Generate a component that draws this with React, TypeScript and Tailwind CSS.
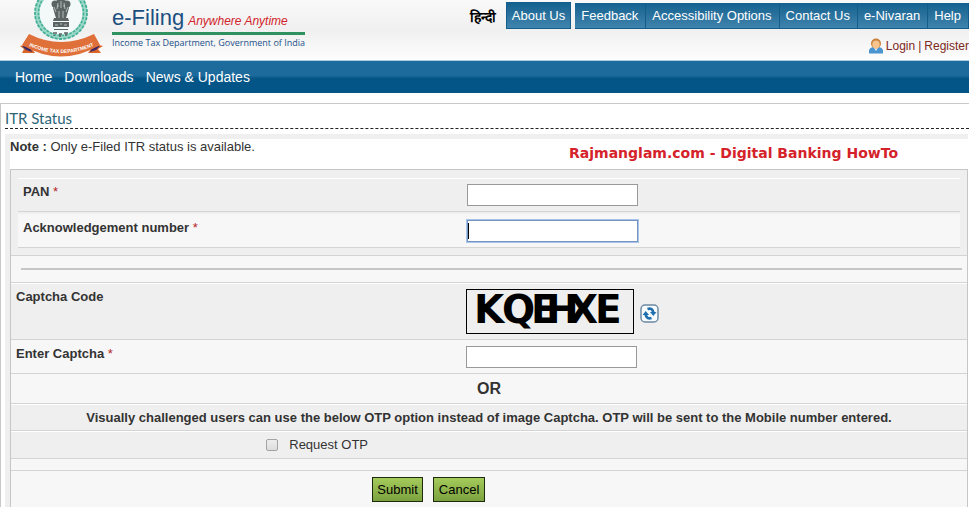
import React from 'react'

const topLinks = ['Feedback', 'Accessibility Options', 'Contact Us', 'e-Nivaran', 'Help']
const mainLinks = ['Home', 'Downloads', 'News & Updates']

// Each captcha letter has its own place, so that some of them run into each other
const captchaLetters = [
  { char: 'K', x: 7 },
  { char: 'Q', x: 35 },
  { char: 'E', x: 64 },
  { char: 'H', x: 79 },
  { char: 'X', x: 101 },
  { char: 'E', x: 128 },
]

function Emblem() {
  return (
    <svg className="h-[57px] w-[88px]" viewBox="0 0 88 57" role="img" aria-label="Income Tax Department emblem">
      <defs>
        <path id="ribbon-line" d="M5 43 Q43 63 82 43" />
      </defs>
      {/* Wreath */}
      <circle cx="43" cy="13" r="24" fill="#f3f8f8" stroke="#9ad8c8" strokeWidth="5" />
      <circle cx="43" cy="13" r="26" fill="none" stroke="#45ae96" strokeWidth="1.8" strokeDasharray="3 1.4" />
      <circle cx="43" cy="13" r="22.5" fill="none" stroke="#45ae96" strokeWidth="1.6" strokeDasharray="2.6 1.4" />
      {/* Lion capital */}
      <g fill="#5c6463">
        <path d="M37 2 Q43 -4 49 2 L51 8 L49 15 L48 18 H38 L37 15 L35 8 Z" />
        <circle cx="37" cy="4" r="3.5" />
        <circle cx="49" cy="4" r="3.5" />
        <path d="M36 18 H50 L51 21 H35 Z" />
        <path d="M35 22 H51 V27 H35 Z" />
        <path d="M36 29 H50 V30 H36 Z" />
      </g>
      <g stroke="#c9d2d0" fill="none" strokeWidth="0.8">
        <path d="M40 3 L39 9 M46 3 L47 9 M43 1 V8 M41 11 V18 M45 11 V18 M39 6 H41 M45 6 H47" />
        <path d="M37 25 H40 M42 24 H44 M46 25 H49 M36 7 L38 12 M50 7 L48 12" />
      </g>
      <path d="M35 33 H39 M41 34 H44 M46 33 H50 M36 35 V36 M42 34 V37 M48 33 V36" stroke="#5c6463" strokeWidth="1.5" />
      {/* Ribbon */}
      <path d="M10 44 L2 46 L6 49 L4 53 L17 53 Z" fill="#d9652b" />
      <path d="M77 44 L85 46 L80 49 L83 53 L70 53 Z" fill="#d9652b" />
      <path d="M4 46 L12 47 L14 52 L8 50 Z" fill="#3d2a66" />
      <path d="M82 46 L74 47 L72 52 L78 50 Z" fill="#3d2a66" />
      <path d="M11 34 Q43 50 76 34 L82 45 Q43 68 4 45 Z" fill="#e0703a" />
      <text fontSize="5" fontWeight="700" fill="#fff" fontFamily="Liberation Sans, sans-serif" textAnchor="middle">
        <textPath href="#ribbon-line" startOffset="50%">INCOME TAX DEPARTMENT</textPath>
      </text>
    </svg>
  )
}

function UserIcon() {
  return (
    <svg className="h-4 w-4" viewBox="0 0 16 16" aria-hidden="true">
      <path d="M1 15.5 V12 Q2 9.5 5 9 H11 Q14 9.5 15 12 V15.5 Z" fill="#4a94cf" />
      <path d="M5.5 9 L8 13 L10.5 9 Z" fill="#e8f1f8" />
      <circle cx="8" cy="5.5" r="5" fill="#c9803a" />
      <ellipse cx="8" cy="6.5" rx="3.7" ry="4" fill="#f6c48c" />
    </svg>
  )
}

function RefreshIcon() {
  return (
    <svg className="block h-[19px] w-[19px]" viewBox="0 0 19 19" aria-hidden="true">
      <rect x="1" y="1" width="17" height="17" rx="4" fill="#f7fbfd" stroke="#6d8ba3" strokeWidth="1.5" />
      <path d="M7.5 5 Q12.5 3.5 13.3 8.5" fill="none" stroke="#1f6fae" strokeWidth="2.8" />
      <path d="M10 8 H16.5 L13.3 12 Z" fill="#1f6fae" />
      <path d="M11.5 14 Q6.5 15.5 5.7 10.5" fill="none" stroke="#1f6fae" strokeWidth="2.8" />
      <path d="M2.5 11 H9 L5.7 7 Z" fill="#1f6fae" />
    </svg>
  )
}

function Required() {
  return <span className="font-normal text-[#b32525]"> *</span>
}

export default function App() {
  return (
    <div className="min-h-screen overflow-hidden bg-white font-['Liberation_Sans',Arial,sans-serif] text-[13px] text-[#333333]">
      {/* Header */}
      <header className="flex h-[60px] items-start bg-linear-to-b from-[#f9f9f9] via-[#f0f0f0] to-[#fdfdfd] pl-[18px]">
        <Emblem />
        <div className="ml-[6px] pt-1">
          <div className="flex items-baseline gap-1 border-b-3 border-[#2f9060] leading-7">
            <span className="text-[22px] text-[#1c4f80]">e-Filing</span>
            <span className="text-xs text-[#d2232a] italic">Anywhere Anytime</span>
          </div>
          <p className="font-['Open_Sans',sans-serif] text-[9px] leading-4 font-medium text-[#1b5088]">
            Income Tax Department, Government of India
          </p>
        </div>

        <div className="ml-auto flex flex-col items-end">
          <nav className="flex items-start pt-[2px] text-white">
            <a href="#hindi" lang="hi" className="mr-[10px] pt-[7px] text-sm leading-4 font-bold text-black">
              हिन्दी
            </a>
            <a
              href="#about"
              className="mr-1 h-[27px] border border-[#135d8c] bg-linear-to-b from-[#13618f] to-[#4085ae] px-[5px] leading-[26px]"
            >
              About Us
            </a>
            <div className="mt-px flex bg-linear-to-b from-[#13618f] to-[#4085ae]">
              {topLinks.map((link) => (
                <a
                  key={link}
                  href="#top"
                  className="h-[26px] border-r border-b border-[#135d8c] pr-[7px] pl-[6px] leading-[26px]"
                >
                  {link}
                </a>
              ))}
            </div>
          </nav>
          <div className="mt-[9px] flex items-center text-xs text-[#7d2a22]">
            <UserIcon />
            <a href="#login" className="ml-[2px]">Login</a>
            <span className="px-[3px]">|</span>
            <a href="#register">Register</a>
          </div>
        </div>
      </header>

      {/* Main menu */}
      <nav className="flex h-[33px] items-center gap-3 border-t border-[#a8cfe0] bg-linear-to-b from-[#1d6a9c] from-45% to-[#045587] to-55% pl-[15px] text-sm text-white">
        {mainLinks.map((link) => (
          <a key={link} href="#menu">{link}</a>
        ))}
      </nav>

      <main className="mt-[10px] border-t border-l border-[#c8c8c8] pl-1">
        <h1 className="border-b border-dashed border-[#222222] pt-1 font-[Lato,sans-serif] text-[15px] leading-5 text-[#2c6478]">
          ITR Status
        </h1>

        <div className="mt-[5px] mr-px border-t-5 border-l-5 border-[#efefef]">
          <div className="flex h-[30px] items-start">
            <p className="leading-4">
              <b>Note :</b> Only e-Filed ITR status is available.
            </p>
            <p className="mt-1 mr-[70px] ml-auto font-['DejaVu_Sans',Verdana,sans-serif] text-sm leading-5 font-bold text-[#d5222a]">
              Rajmanglam.com - Digital Banking HowTo
            </p>
          </div>

          <form className="border border-b-0 border-[#c6c6c6] bg-[#f7f7f7]" onSubmit={(e) => e.preventDefault()}>
            <div className="border-b border-[#d4d4d4] bg-[#efefef] px-[7px] pt-2 pb-[7px]">
              <div className="flex h-[34px] items-center border-t border-b border-t-white border-b-[#d4d4d4]">
                <label htmlFor="pan" className="w-[47.7%] pb-[6px] pl-[5px] font-bold">
                  PAN<Required />
                </label>
                <input id="pan" type="text" className="h-[22px] w-[171px] border border-[#999999] bg-white px-1" />
              </div>
              <div className="mt-[2px] flex h-[34px] items-center border-b border-[#d4d4d4] bg-[#f7f7f7]">
                <label htmlFor="ack" className="w-[47.7%] pb-[6px] pl-[5px] font-bold">
                  Acknowledgement number<Required />
                </label>
                <div className="flex h-[22px] w-[171px] items-center border border-[#7295c4] bg-white ring-1 ring-[#a9c3e6]">
                  <span className="h-4 w-px bg-black" />
                  <input id="ack" type="text" className="w-full outline-none" />
                </div>
              </div>
            </div>

            <div className="border-b border-[#d4d4d4] py-3 pr-[5px] pl-[10px]">
              <hr className="border-t-2 border-[#c6c6c6]" />
            </div>

            <div className="flex h-[57px] border-t border-b border-t-white border-b-[#d4d4d4] bg-[#efefef]">
              <span className="w-[47.6%] pt-[3px] pl-[5px] font-bold">Captcha Code</span>
              <div className="flex items-center gap-[6px]">
                <svg
                  className="h-[45px] w-[168px] overflow-visible border border-black font-['DejaVu_Sans',Verdana,sans-serif] text-[39px] font-bold"
                  viewBox="0 0 166 43"
                  role="img"
                  aria-label="Captcha"
                >
                  {captchaLetters.map((letter) => (
                    <text key={letter.x} x={letter.x} y="33">{letter.char}</text>
                  ))}
                </svg>
                <button type="button" aria-label="Refresh captcha" className="mt-1">
                  <RefreshIcon />
                </button>
              </div>
            </div>

            <div className="flex h-[34px] items-center border-b border-[#d4d4d4]">
              <label htmlFor="captcha" className="w-[47.6%] pb-[6px] pl-[5px] font-bold">
                Enter Captcha<Required />
              </label>
              <input id="captcha" type="text" className="h-[22px] w-[171px] border border-[#999999] bg-white px-1" />
            </div>

            <p className="h-[30px] border-b border-[#d4d4d4] text-center text-base leading-[30px] font-bold">OR</p>

            <p className="h-[27px] border-t border-b border-t-white border-b-[#d4d4d4] bg-[#efefef] text-center leading-[26px] font-bold">
              Visually challenged users can use the below OTP option instead of image Captcha. OTP will be sent to the
              Mobile number entered.
            </p>

            <div className="h-7 border-t border-b border-t-white border-b-[#d4d4d4] bg-[#efefef] pl-[26.7%]">
              <label className="flex items-center gap-[11px] leading-[26px]">
                <input
                  type="checkbox"
                  className="h-3 w-3 appearance-none rounded-xs border border-[#a3a3a3] bg-linear-to-b from-[#eeeeee] to-[#dddddd]"
                />
                Request OTP
              </label>
            </div>

            <div className="h-3 border-b border-[#d4d4d4]" />

            <div className="flex gap-[10px] pt-[6px] pb-3 pl-[37.8%] text-black">
              <button
                type="submit"
                className="h-[25px] border border-[#1d2a0c] bg-linear-to-b from-[#a5cb5b] to-[#7ba23f] px-1"
              >
                Submit
              </button>
              <button
                type="button"
                className="h-[25px] border border-[#1d2a0c] bg-linear-to-b from-[#a5cb5b] to-[#7ba23f] px-[5px]"
              >
                Cancel
              </button>
            </div>
          </form>
        </div>
      </main>
    </div>
  )
}
